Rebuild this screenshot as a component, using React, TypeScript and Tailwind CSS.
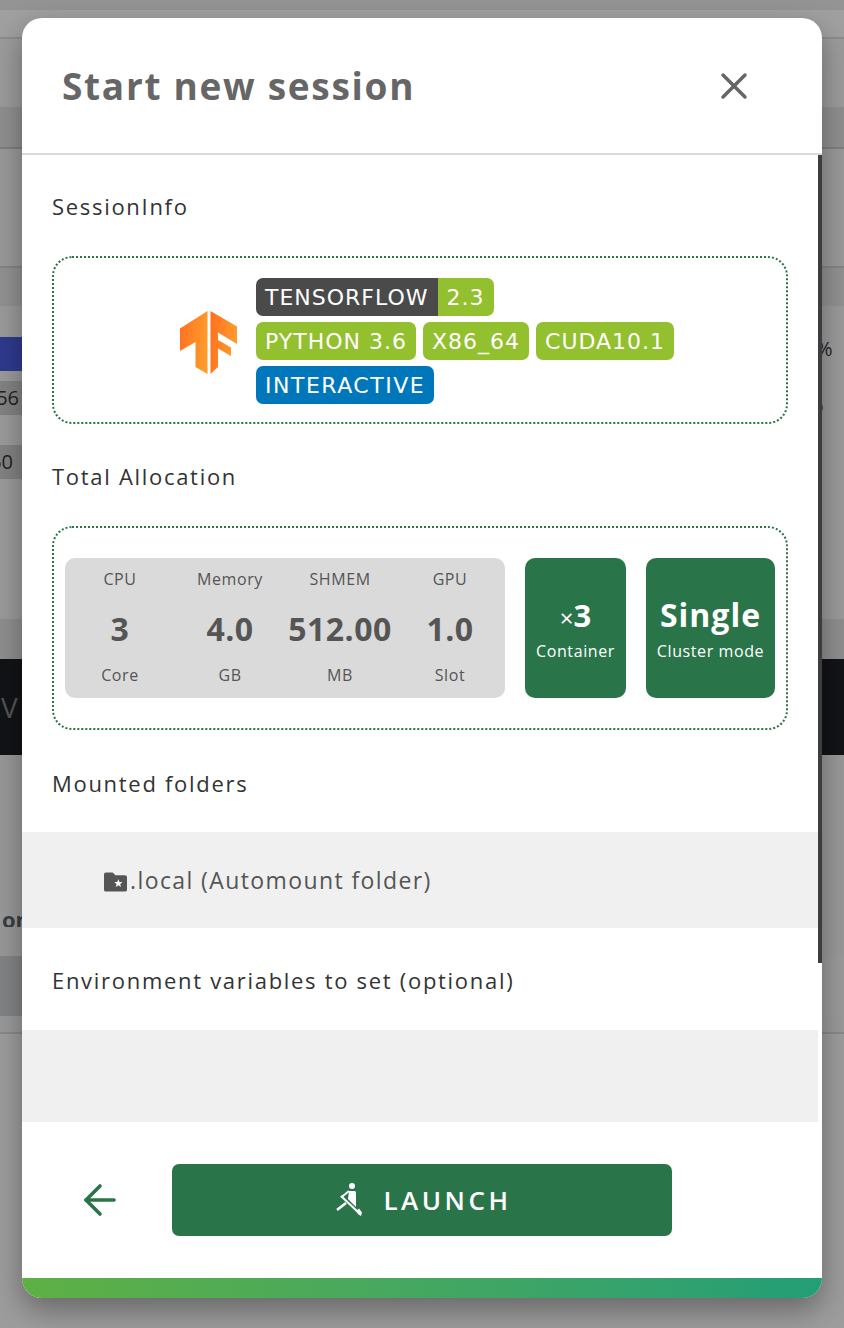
import { ArrowLeft, X } from 'lucide-react'

const ubuntu = { fontFamily: '"Open Sans", "Noto Sans", sans-serif' }

function Badge({ children, className = '' }: { children: React.ReactNode; className?: string }) {
  return (
    <span className={`h-[38px] flex items-center px-[9px] text-[22px] text-white font-['DejaVu_Sans',sans-serif] ${className}`}>
      {children}
    </span>
  )
}

function TfLogo() {
  return (
    <svg width="58" height="64" viewBox="0 0 58 64" className="mt-[5px]">
      <defs>
        <linearGradient id="tf" x1="0" y1="0" x2="1" y2="0.2">
          <stop offset="0" stopColor="#ff6f1f" />
          <stop offset="1" stopColor="#ff9a2b" />
        </linearGradient>
      </defs>
      <path d="M27.500 0v63l-12-7V31L0 40V17.500Z" fill="url(#tf)" />
      <path d="M30.500 0 57 15.500V33L38 21.500v7.500l13 7.500V45l-13-7.500V56l-7.500 7Z" fill="url(#tf)" />
    </svg>
  )
}

function AllocColumn({ top, value, unit }: { top: string; value: string; unit: string }) {
  return (
    <div className="w-[110px] flex flex-col items-center text-[#555]">
      <span className="text-[16px] leading-[20px] tracking-[0.6px] mt-[11px]">{top}</span>
      <span className="text-[32px] leading-[40px] font-bold tracking-[0.5px] mt-[20px]">{value}</span>
      <span className="text-[16px] leading-[20px] tracking-[0.6px] mt-[16px]">{unit}</span>
    </div>
  )
}

function SectionLabel({ children, className = '' }: { children: React.ReactNode; className?: string }) {
  return <h3 className={`pl-[30px] text-[22px] leading-[30px] font-normal tracking-[1.7px] text-[#333] ${className}`}>{children}</h3>
}

function RunnerIcon() {
  return (
    <svg width="26" height="34" viewBox="0 0 26 34" fill="white">
      <circle cx="16" cy="3" r="3" />
      <path d="M13 8h5.500q1.500 0 1.500 1.500V24l-8-8Z" />
      <path d="M5 14.500 13 8" stroke="white" strokeWidth="2" />
      <path d="M5 13 23 30" stroke="white" strokeWidth="2" />
      <path d="M1 27 10 20" stroke="white" strokeWidth="2.600" />
      <path d="m20 28 3-2.500 3 4-1 3.500-2.500-1.500Z" />
    </svg>
  )
}

export default function App() {
  return (
    <div className="relative w-[844px] h-[1328px] overflow-hidden bg-[#9b9b9b]" style={ubuntu}>
      {/* blurred page behind the dialog */}
      <div className="flex flex-col h-full">
        <div className="h-[10px] bg-[#949494]" />
        <div className="h-[27px] bg-[#a0a0a0]" />
        <div className="h-[2px] bg-[#8c8c8c]" />
        <div className="h-[68px] bg-[#9c9c9c]" />
        <div className="h-[40px] bg-[#909090]" />
        <div className="h-[2px] bg-[#7f7f7f]" />
        <div className="h-[117px] bg-[#9a9a9a]" />
        <div className="h-[2px] bg-[#858585]" />
        <div className="h-[38px] bg-[#929292]" />
        <div className="h-[31px] bg-[#9b9b9b]" />
        <div className="h-[34px] flex justify-between">
          <div className="w-[22px] bg-[#2f3a8f]" />
          <span className="w-[22px] text-[20px] leading-[24px] text-[#222] overflow-hidden">
            <span className="block -ml-[6px] whitespace-nowrap">%</span>
          </span>
        </div>
        <div className="h-[10px]" />
        <div className="h-[34px] flex justify-between">
          <div className="w-[22px] bg-[#838383] text-[20px] leading-[34px] text-[#222] overflow-hidden flex justify-end">
            <span className="pr-[3px]">56</span>
          </div>
          <span className="w-[22px] text-[20px] leading-[48px] text-[#222] overflow-hidden">
            <span className="block -ml-[15px] whitespace-nowrap">%</span>
          </span>
        </div>
        <div className="h-[30px]" />
        <div className="h-[34px] flex">
          <div className="w-[22px] bg-[#838383] text-[20px] leading-[34px] text-[#222] overflow-hidden flex justify-end">
            <span className="pr-[9px]">50</span>
          </div>
        </div>
        <div className="h-[140px]" />
        <div className="h-[40px] bg-[#8f8f8f]" />
        <div className="h-[96px] bg-[#121316] text-[#555] text-[28px] leading-[96px] pl-[1px]">V</div>
        <div className="h-[172px] bg-[#999] flex items-end">
          <span className="text-[22px] leading-[30px] font-bold text-[#3a3d45] pl-[2px] mb-[-7px]">on</span>
        </div>
        <div className="h-[29px] bg-[#999]" />
        <div className="h-[60px] flex">
          <div className="w-[22px] bg-[#838486]" />
        </div>
        <div className="h-[16px] bg-[#9a9a9a]" />
        <div className="h-[2px] bg-[#8a8a8a]" />
        <div className="flex-1 bg-[#9d9d9d]" />
      </div>

      {/* dialog */}
      <div className="absolute left-[22px] top-[18px] w-[800px] h-[1280px] rounded-[20px] overflow-hidden bg-white flex flex-col shadow-[0_12px_30px_rgba(0,0,0,0.35)]">
        <header className="h-[135px] shrink-0 border-b-2 border-[#d9d9d9] flex items-center justify-between pl-[40px] pr-[66px] box-content">
          <h2 className="text-[37px] leading-[48px] font-bold tracking-[1.7px] text-[#666]">Start new session</h2>
          <X size={44} strokeWidth={1.9} color="#666" />
        </header>

        <div className="relative flex-1 min-h-0">
          {/* scrollbar */}
          <div className="absolute right-0 top-0 h-[808px] w-[4px] bg-[#3d3d3d]" />

          <SectionLabel className="mt-[36px]">SessionInfo</SectionLabel>

          <div className="mx-[30px] mt-[35px] h-[168px] w-[736px] border-2 border-dotted border-[#2a744a] rounded-[20px] flex items-center pl-[126px]">
            <TfLogo />
            <div className="ml-[18px] mt-[2px] flex flex-col gap-[6px]">
              <div className="flex">
                <Badge className="bg-[#4a4a4a] rounded-l-[7px] tracking-[1px]">TENSORFLOW</Badge>
                <Badge className="bg-[#93c02e] rounded-r-[7px] tracking-[1px]">2.3</Badge>
              </div>
              <div className="flex gap-[7px]">
                <Badge className="bg-[#93c02e] rounded-[7px] tracking-[1px]">PYTHON 3.6</Badge>
                <Badge className="bg-[#93c02e] rounded-[7px] tracking-[1px]">X86_64</Badge>
                <Badge className="bg-[#93c02e] rounded-[7px] tracking-[1px]">CUDA10.1</Badge>
              </div>
              <div className="flex">
                <Badge className="bg-[#0077bb] rounded-[7px] tracking-[1.500px]">INTERACTIVE</Badge>
              </div>
            </div>
          </div>

          <SectionLabel className="mt-[37px]">Total Allocation</SectionLabel>

          <div className="mx-[30px] mt-[35px] h-[204px] w-[736px] border-2 border-dotted border-[#2a744a] rounded-[20px] flex items-center pl-[11px]">
            <div className="w-[440px] h-[140px] bg-[#dadada] rounded-[10px] flex justify-center">
              <AllocColumn top="CPU" value="3" unit="Core" />
              <AllocColumn top="Memory" value="4.0" unit="GB" />
              <AllocColumn top="SHMEM" value="512.00" unit="MB" />
              <AllocColumn top="GPU" value="1.0" unit="Slot" />
            </div>
            <div className="ml-[20px] w-[101px] h-[140px] bg-[#2a744a] rounded-[10px] flex flex-col items-center text-white">
              <div className="mt-[37px] h-[40px] leading-[40px] font-bold text-[31px]">
                <span className="text-[24px] font-normal">×</span>3
              </div>
              <span className="text-[16px] leading-[20px] tracking-[0.6px] mt-[6px]">Container</span>
            </div>
            <div className="ml-[20px] w-[129px] h-[140px] bg-[#2a744a] rounded-[10px] flex flex-col items-center text-white">
              <div className="mt-[37px] h-[40px] leading-[40px] font-bold text-[32px] tracking-[1px]">Single</div>
              <span className="text-[16px] leading-[20px] tracking-[0.6px] mt-[6px] whitespace-nowrap">Cluster mode</span>
            </div>
          </div>

          <SectionLabel className="mt-[38px]">Mounted folders</SectionLabel>

          <div className="mt-[34px] h-[96px] w-[796px] bg-[#f0f0f0] flex items-center pl-[82px]">
            <svg width="23" height="20" viewBox="0 0 24 20" fill="#555" className="mt-[4px]">
              <path d="M2 0h7l3 3h10a2 2 0 0 1 2 2v13a2 2 0 0 1-2 2H2a2 2 0 0 1-2-2V2a2 2 0 0 1 2-2Z" />
              <path d="m15 7 1.200 2.900 3.100.2-2.400 2 .8 3L15 13.500l-2.700 1.600.8-3-2.400-2 3.100-.2Z" fill="white" />
            </svg>
            <span className="ml-[3px] text-[23px] tracking-[1.4px] text-[#555]">.local (Automount folder)</span>
          </div>

          <SectionLabel className="mt-[37px]">Environment variables to set (optional)</SectionLabel>

          <div className="mt-[35px] h-[92px] w-[796px] bg-[#f0f0f0]" />
        </div>

        <footer className="h-[176px] shrink-0 flex flex-col">
          <div className="flex items-start pt-[42px] flex-1">
            <div className="flex items-center">
              <ArrowLeft size={48} strokeWidth={1.8} color="#2a744a" className="ml-[54px]" />
              <button className="ml-[48px] w-[500px] h-[72px] pl-[4px] rounded-[7px] bg-[#2a744a] flex items-center justify-center text-white">
                <RunnerIcon />
                <span className="ml-[21px] text-[26px] tracking-[3.500px] font-semibold">LAUNCH</span>
              </button>
            </div>
          </div>
          <div className="h-[20px] bg-gradient-to-r from-[#5eb043] to-[#229e76]" />
        </footer>
      </div>
    </div>
  )
}
